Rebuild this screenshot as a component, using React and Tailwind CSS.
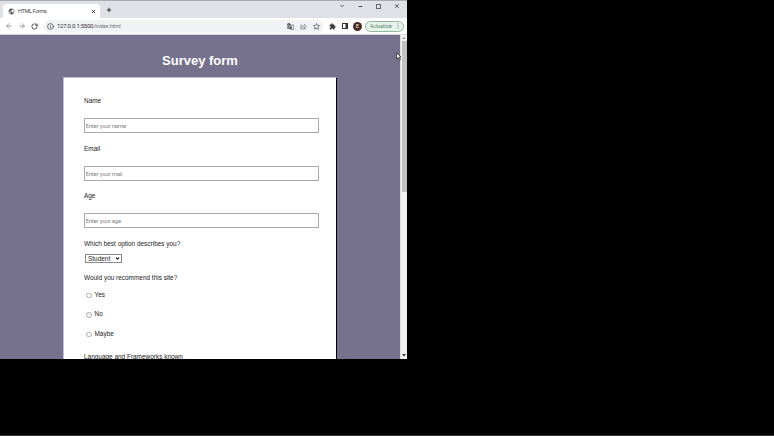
import React from "react";
import { ArrowLeft, ArrowRight, RotateCw, Star, Info, X, Plus, ChevronDown, Minus } from "lucide-react";
import { MdExtension, MdPublic, MdGTranslate } from "react-icons/md";

function TabStrip() {
  return (
    <div className="flex h-[18px] items-end border-t border-[#a9a9b2] bg-[#dee1e6]">
      <div className="ml-[3px] flex h-[14px] w-[97px] items-center rounded-t-[4px] bg-white pl-[5px] pr-[4px]">
        <MdPublic className="size-[7px] text-[#4a4d51]" />
        <span className="ml-[3px] text-[5.6px] leading-[7px] tracking-[-0.4px] text-[#45484c]">HTML Forms</span>
        <X className="ml-auto size-[5px] text-[#222]" strokeWidth={4} />
      </div>
      <Plus className="mb-[5px] ml-[6px] size-[6px] text-[#333]" strokeWidth={4} />
      <div className="mb-[9px] ml-auto flex items-center pr-[7px] text-[#333]">
        <ChevronDown className="mr-[13px] size-[6px]" strokeWidth={3} />
        <Minus className="mr-[13px] size-[5px]" strokeWidth={4} />
        <div className="mr-[13px] size-[5px] border border-[#66686c]" />
        <X className="size-[6px]" strokeWidth={3} />
      </div>
    </div>
  );
}

function Toolbar() {
  return (
    <div className="flex h-[17px] items-center border-b border-[#d5d6dd] bg-white pl-[5px] pr-[3px] text-[#44474b]">
      <ArrowLeft className="size-[8px] shrink-0 text-[#8b8d91]" strokeWidth={2.5} />
      <ArrowRight className="ml-[5px] size-[8px] shrink-0 text-[#8b8d91]" strokeWidth={2.5} />
      <RotateCw className="ml-[5px] size-[7px] shrink-0" strokeWidth={3} />
      <div className="ml-[6px] flex h-[13px] w-[279px] shrink-0 items-center rounded-full bg-[#f0f2f4] pl-[3px] pr-[3.500px]">
        <Info className="size-[7px]" strokeWidth={2.5} />
        <span className="ml-[3px] text-[6px] leading-[8px] tracking-[-0.27px] text-[#303236]">
          127.0.0.1:5500<span className="text-[#77797d]">/index.html</span>
        </span>
        <MdGTranslate className="ml-auto size-[7px]" />
        <svg viewBox="0 0 14 14" className="ml-[6px] size-[7px]" fill="none" stroke="#777" strokeWidth="1.3">
          <path d="M4 4H1.5v8h9V9M4 9c0-3 2-4 5-4V2.500l4 4-4 4V8C7 8 5 8 4 9z" />
        </svg>
        <Star className="ml-[6px] size-[7px]" strokeWidth={2.5} />
      </div>
      <MdExtension className="ml-[5.500px] size-[7px] shrink-0 text-[#36383c]" />
      <svg viewBox="0 0 12 12" className="ml-[6px] size-[6px] shrink-0">
        <rect x="1" y="1" width="10" height="10" fill="none" stroke="#303338" strokeWidth="2" />
        <rect x="7" y="1" width="4" height="10" fill="#303338" />
      </svg>
      <div className="ml-[5.500px] flex size-[9px] shrink-0 items-center justify-center rounded-full bg-[#4c2a22] text-[5px] leading-none text-white">E</div>
      <div className="ml-auto flex h-[11px] w-[39px] shrink-0 items-center rounded-full border border-[#93b8a0] bg-[#e6f3ea] pl-[4px] pr-[4px] text-[5px] leading-none text-[#55806a]">
        <span>Actualizar</span>
        <svg viewBox="0 0 2 8" className="ml-auto h-[6px] w-[2px]" fill="#44705a">
          <rect x="0.500" y="0.500" width="1.200" height="1.300" />
          <rect x="0.500" y="3.300" width="1.200" height="1.300" />
          <rect x="0.500" y="6.100" width="1.200" height="1.300" />
        </svg>
      </div>
    </div>
  );
}

function Field({ label, hint }) {
  return (
    <label className="flex h-[47.5px] flex-col">
      <span className="leading-[8px]">{label}</span>
      <input
        type="text"
        placeholder={hint}
        className="mt-[13px] h-[15px] w-[235px] border border-[#aaa] bg-white p-0 pl-[0.500px] font-[Roboto,sans-serif] text-[6px] leading-[8px] tracking-[-0.2px] outline-none placeholder:text-[#858585]"
      />
    </label>
  );
}

function Choice({ label }) {
  return (
    <label className="flex h-[19.7px] items-start">
      <span className="ml-[2px] mt-[2px] size-[5.500px] rounded-full border border-[#aaa] bg-white" />
      <span className="ml-[3px] leading-[8px]">{label}</span>
    </label>
  );
}

function ScrollBar() {
  return (
    <div className="flex w-[7px] shrink-0 flex-col items-center border-l border-[#dedde4] bg-[#f1f1f1]">
      <svg viewBox="0 0 6 6" className="size-[6px]"><path d="M1.500 4L3 2l1.500 2z" fill="#888" /></svg>
      <div className="h-[151px] w-[5px] bg-[#c1c1c1]" />
      <svg viewBox="0 0 6 6" className="mt-auto mb-[1px] size-[6px]"><path d="M1 2h4L3 4.500z" fill="#333" /></svg>
    </div>
  );
}

export default function App() {
  return (
    <div className="relative h-[436px] w-[774px] overflow-hidden border-b border-[#353535] bg-black font-['Liberation_Sans',Arial,sans-serif]">
      <div className="flex h-[359px] w-[407px] flex-col overflow-hidden">
        <div className="font-[Roboto,sans-serif]">
          <TabStrip />
          <Toolbar />
        </div>
        <div className="flex min-h-0 flex-1">
          <main className="flex min-w-0 flex-1 flex-col overflow-hidden bg-[#76718c]">
            <h1 className="mt-[18px] text-center text-[13px] font-bold leading-[16px] text-white">Survey form</h1>
            <form className="ml-[63px] mt-[8px] h-[300px] w-[273px] shrink-0 border-l border-t border-[#c4bfd8] bg-white pl-[20px] pt-[19.400px] text-[6.45px] text-[#222] shadow-[1px_1px_0_#000]">
              <Field label="Name" hint="Enter your name" />
              <Field label="Email" hint="Enter your mail" />
              <Field label="Age" hint="Enter your age" />
              <div className="leading-[8px]">Which best option describes you?</div>
              <div className="ml-[1px] mt-[6px] flex h-[9px] w-[37px] items-center border border-[#888] pl-[2px] pr-[1px] leading-[7px]">
                <span>Student</span>
                <ChevronDown className="ml-auto size-[5px] text-black" strokeWidth={5} />
              </div>
              <div className="mb-[8.500px] mt-[11.200px] leading-[8px]">Would you recommend this site?</div>
              <Choice label="Yes" />
              <Choice label="No" />
              <Choice label="Maybe" />
              <div className="mt-[3.200px] leading-[8px]">Language and Frameworks known</div>
            </form>
          </main>
          <ScrollBar />
        </div>
      </div>
      <svg viewBox="0 0 8 14" className="absolute left-[396px] top-[52px] h-[9px] w-[5px]">
        <path d="M1 1v10l2.500-2 2 4 1.500-1-2-4h3z" fill="#fff" stroke="#222" strokeWidth="1.200" />
      </svg>
    </div>
  );
}
